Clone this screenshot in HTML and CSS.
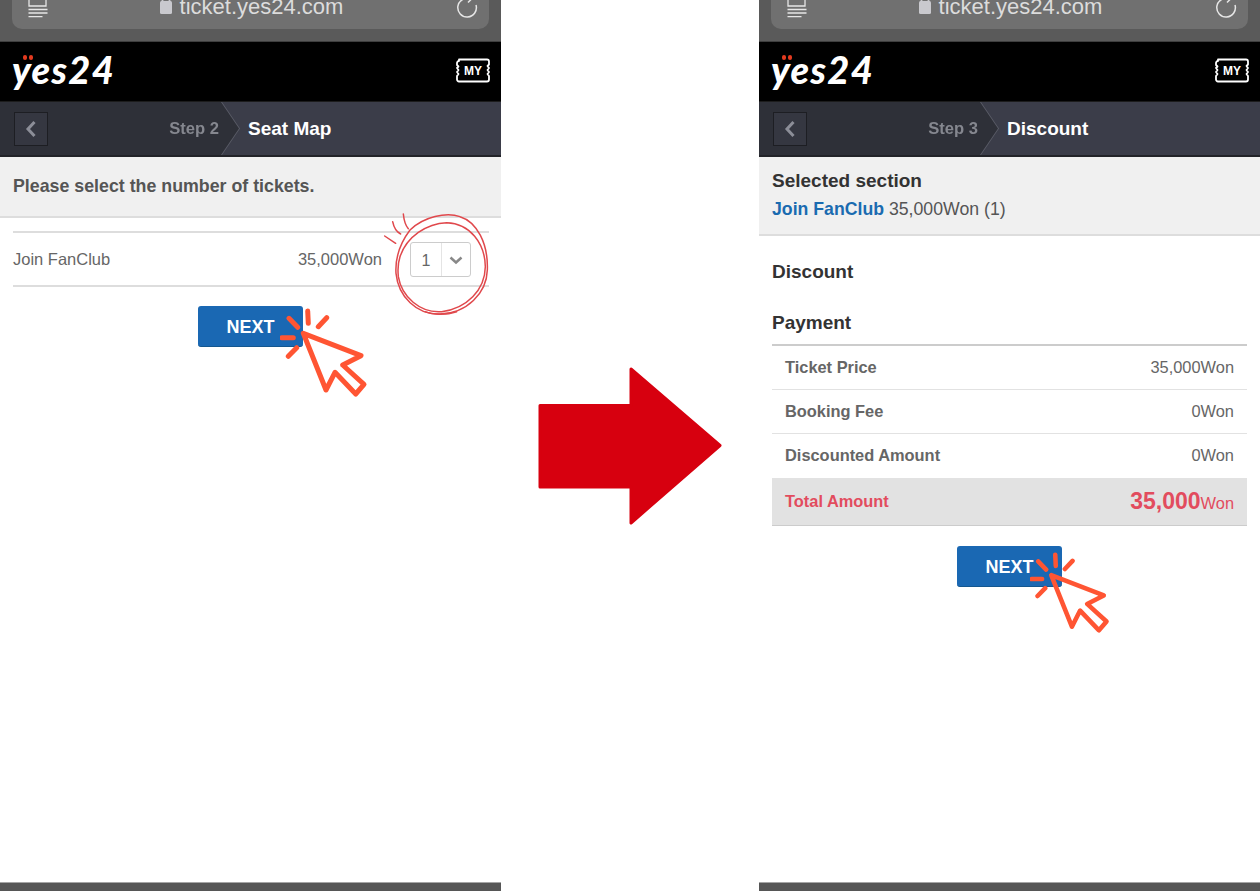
FILE: index.html
```html
<!DOCTYPE html>
<html lang="en">
<head>
<meta charset="utf-8">
<title>Yes24 ticket steps</title>
<link rel="stylesheet" href="styles.css">
</head>
<body>
<div class="page">
  <section class="phone">
    <div class="browser">
      <div class="url-pill">
        <svg class="ico-book" viewBox="0 0 20 20"><path d="M1 -4h17v10h-17z M0.500 9.500h19 M0.500 13h19 M0.500 16.700h14"/></svg>
        <div class="address">
          <svg class="ico-lock" viewBox="0 0 12 22"><rect x="0" y="8" width="12" height="13" rx="1.500"/><path d="M2.500 9v-4a3.500 3.500 0 0 1 7 0v4"/></svg>
          <span>ticket.yes24.com</span>
        </div>
        <svg class="ico-reload" viewBox="0 0 22 22"><path d="M14.500 3a9.300 9.300 0 1 0 5.500 6"/><path d="M12 0l3 3.500-3 3"/></svg>
      </div>
    </div>
    <header class="brand">
      <div class="logo"><i class="dot dot-a"></i><i class="dot dot-b"></i><span>yes24</span></div>
      <svg class="my" viewBox="0 0 36 25"><path d="M4 1.500h28a2 2 0 0 1 2 2v3l-1.500 1.500 1.500 2-1.500 2 1.500 2-1.500 2 1.500 2v3.500a2 2 0 0 1-2 2h-28a2 2 0 0 1-2-2v-3.500l1.500-2-1.500-2 1.500-2-1.500-2 1.500-1.500-1.500-1.500v-2a2 2 0 0 1 2-2z"/><text x="18" y="17.300" text-anchor="middle">MY</text></svg>
    </header>
    <nav class="steps">
      <div class="steps-left">
        <span class="back"><svg viewBox="0 0 12 20"><path d="M9.500 3l-6.500 7 6.500 7"/></svg></span>
        <span class="step">Step 2</span>
      </div>
      <span class="step-title">Seat Map</span>
    </nav>
    <div class="notice">Please select the number of tickets.</div>
    <div class="ticket-row">
      <span class="ticket-name">Join FanClub</span>
      <span class="ticket-price">35,000Won</span>
      <div class="qty">
        <span class="qty-num">1</span>
        <span class="qty-arrow"><svg viewBox="0 0 14 9"><path d="M1.500 1.500l5.500 5 5.500-5"/></svg></span>
      </div>
    </div>
    <button class="next next-a">NEXT</button>
    <div class="spacer"></div>
    <div class="home-bar"></div>

    <svg class="scribble" viewBox="0 0 393 375">
      <path d="M120 90C160 50 230 35 270 50C320 65 355 130 352 210C350 280 290 340 210 342C140 345 85 290 78 220C75 170 90 130 120 90"/>
      <path d="M90 170C110 110 170 70 230 68C300 70 345 130 346 200C345 270 290 325 215 335C150 340 95 290 85 230C82 200 85 185 90 170"/>
      <path d="M165 335C190 345 230 345 260 335"/>
      <path d="M44 108L77 130M68 65C72 85 80 96 92 102M100 42C102 62 106 76 115 86"/>
    </svg>
    <svg class="cursor cursor-a" viewBox="0 0 90 90">
      <path d="M23.300 25.300L81 47.700L62.700 57L84 76.300L75.700 86L55 64.300L46 82Z"/>
      <path d="M9 10.300L17.700 19.300M27.700 3L28.300 15.300M46.700 9.700L38.300 18.700M1.700 29.700H13.300M16.700 39.700L8.300 48.300"/>
    </svg>
  </section>

  <div class="between">
    <svg class="big-arrow" viewBox="0 0 184 158"><path d="M2 38.500H93V2L182 78.500L93 156V120H2Z"/></svg>
  </div>

  <section class="phone">
    <div class="browser">
      <div class="url-pill">
        <svg class="ico-book" viewBox="0 0 20 20"><path d="M1 -4h17v10h-17z M0.500 9.500h19 M0.500 13h19 M0.500 16.700h14"/></svg>
        <div class="address">
          <svg class="ico-lock" viewBox="0 0 12 22"><rect x="0" y="8" width="12" height="13" rx="1.500"/><path d="M2.500 9v-4a3.500 3.500 0 0 1 7 0v4"/></svg>
          <span>ticket.yes24.com</span>
        </div>
        <svg class="ico-reload" viewBox="0 0 22 22"><path d="M14.500 3a9.300 9.300 0 1 0 5.500 6"/><path d="M12 0l3 3.500-3 3"/></svg>
      </div>
    </div>
    <header class="brand">
      <div class="logo"><i class="dot dot-a"></i><i class="dot dot-b"></i><span>yes24</span></div>
      <svg class="my" viewBox="0 0 36 25"><path d="M4 1.500h28a2 2 0 0 1 2 2v3l-1.500 1.500 1.500 2-1.500 2 1.500 2-1.500 2 1.500 2v3.500a2 2 0 0 1-2 2h-28a2 2 0 0 1-2-2v-3.500l1.500-2-1.500-2 1.500-2-1.500-2 1.500-1.500-1.500-1.500v-2a2 2 0 0 1 2-2z"/><text x="18" y="17.300" text-anchor="middle">MY</text></svg>
    </header>
    <nav class="steps">
      <div class="steps-left">
        <span class="back"><svg viewBox="0 0 12 20"><path d="M9.500 3l-6.500 7 6.500 7"/></svg></span>
        <span class="step">Step 3</span>
      </div>
      <span class="step-title">Discount</span>
    </nav>
    <div class="selected">
      <h2 class="selected-title">Selected section</h2>
      <p class="selected-line"><b>Join FanClub</b> 35,000Won (1)</p>
    </div>
    <h3 class="heading heading-discount">Discount</h3>
    <h3 class="heading heading-payment">Payment</h3>
    <div class="pay">
      <div class="pay-row"><span class="pay-label">Ticket Price</span><span>35,000Won</span></div>
      <div class="pay-row"><span class="pay-label">Booking Fee</span><span>0Won</span></div>
      <div class="pay-row pay-row-last"><span class="pay-label">Discounted Amount</span><span>0Won</span></div>
      <div class="pay-total"><span class="pay-label">Total Amount</span><span><b class="total-num">35,000</b>Won</span></div>
    </div>
    <button class="next next-b">NEXT</button>
    <div class="spacer"></div>
    <div class="home-bar"></div>

    <svg class="cursor cursor-b" viewBox="0 0 90 90">
      <path d="M23.300 25.300L81 47.700L62.700 57L84 76.300L75.700 86L55 64.300L46 82Z"/>
      <path d="M9 10.300L17.700 19.300M27.700 3L28.300 15.300M46.700 9.700L38.300 18.700M1.700 29.700H13.300M16.700 39.700L8.300 48.300"/>
    </svg>
  </section>
</div>
</body>
</html>
```
FILE: styles.css
```css
* { box-sizing: border-box; }
html, body { margin: 0; padding: 0; background: #fff; }
body { font-family: "Liberation Sans", Arial, sans-serif; overflow: hidden; }
.page { display: flex; width: 1260px; height: 891px; }
.phone { position: relative; width: 501px; height: 891px; display: flex; flex-direction: column; overflow: hidden; }
.between { width: 258px; display: flex; align-items: center; justify-content: center; }
.big-arrow { width: 184px; height: 158px; }
.big-arrow path { fill: #d7000f; stroke: #d7000f; stroke-width: 3; stroke-linejoin: round; }

.browser { height: 42px; flex: none; padding: 0 12px; background: #5a5a5a; border-bottom: 1px solid #3e3e3e; }
.url-pill { height: 29px; background: #707070; border-radius: 0 0 10px 10px; display: flex; align-items: flex-start; justify-content: space-between; padding: 0 11px 0 16px; overflow: hidden; }
.ico-book { width: 20px; height: 20px; flex: none; }
.ico-book path { fill: none; stroke: #e6e6e6; stroke-width: 1.300; }
.address { display: flex; align-items: flex-start; gap: 8px; color: #dcdcdc; font-size: 22px; line-height: 24px; margin-top: -5px; margin-left: -1px; }
.ico-lock { width: 12px; height: 22px; margin-top: -2px; }
.ico-lock rect { fill: #c9c9ce; }
.ico-lock path { fill: none; stroke: #c9c9ce; stroke-width: 1.800; }
.ico-reload { width: 22px; height: 22px; flex: none; margin-top: -4px; }
.ico-reload path { fill: none; stroke: #e6e6e6; stroke-width: 1.500; }

.brand { height: 60px; flex: none; background: #000; display: flex; align-items: center; justify-content: space-between; padding: 0 10px 0 12px; border-bottom: 1px solid #1c1c1c; }
.logo { position: relative; top: -3px; color: #fff; font-family: Lato, "Liberation Sans", sans-serif; font-weight: 900; font-style: italic; font-size: 38px; line-height: 40px; letter-spacing: 1.300px; }
.dot { position: absolute; top: 6px; width: 4px; height: 5px; border-radius: 2px; background: #e33a1f; }
.dot-a { left: 11px; }
.dot-b { left: 17px; }
.my { width: 36px; height: 25px; margin-bottom: 2px; }
.my path { fill: none; stroke: #fff; stroke-width: 1.800; stroke-linejoin: round; }
.my text { fill: #fff; font-family: "Liberation Sans", sans-serif; font-weight: 700; font-size: 12px; }

.steps { height: 55px; flex: none; display: flex; align-items: center; background: #3b3d49; border-bottom: 2px solid #222328; }
.steps-left { position: relative; z-index: 0; width: 239px; height: 100%; display: flex; align-items: center; justify-content: space-between; padding: 0 20px 0 14px; filter: drop-shadow(1px 0 0 #5b5d68); }
.steps-left::before { content: ""; position: absolute; inset: 0; z-index: -1; background: #2e3038; clip-path: polygon(0 0, 221px 0, 100% 50%, 221px 100%, 0 100%); }
.back { width: 34px; height: 34px; background: #353741; border: 1px solid #1d1e23; display: flex; align-items: center; justify-content: center; }
.back svg { width: 12px; height: 20px; }
.back path { fill: none; stroke: #8c8e98; stroke-width: 3; }
.step { color: #85878f; font-weight: 700; font-size: 16.600px; }
.step-title { margin-left: 9px; color: #fff; font-weight: 700; font-size: 19px; }

.notice { height: 61px; flex: none; display: flex; align-items: center; padding: 0 13px; background: #f0f0f0; border-bottom: 2px solid #ddd; color: #555; font-weight: 700; font-size: 17.800px; }
.ticket-row { flex: none; height: 56px; margin: 13px 12px 0 13px; display: flex; align-items: center; border-top: 2px solid #ddd; border-bottom: 2px solid #ddd; color: #666; font-size: 16.500px; }
.ticket-name { flex: 1; padding-top: 1px; }
.ticket-price { margin-right: 28px; padding-top: 1px; }
.qty { width: 61px; height: 35px; margin-right: 18px; display: flex; border: 1px solid #ccc; border-radius: 3px; }
.qty-num { width: 31px; display: flex; align-items: center; justify-content: center; padding-top: 3px; border-right: 1px solid #e4e4e4; font-size: 16px; color: #666; }
.qty-arrow { flex: 1; display: flex; align-items: center; justify-content: center; padding-top: 3px; }
.qty-arrow svg { width: 14px; height: 9px; }
.qty-arrow path { fill: none; stroke: #888; stroke-width: 2.500; }

.next { flex: none; display: block; width: 105px; height: 41px; margin: 0 0 0 198px; padding: 2px 0 0; border: 0; border-bottom: 1px solid #14578f; border-radius: 3px; background: #1a68b3; color: #fff; font-family: inherit; font-weight: 700; font-size: 18px; text-align: center; }
.next-a { margin-top: 19px; }
.next-b { margin-top: 20px; }
.spacer { flex: 1; }
.home-bar { flex: none; height: 9px; background: #565656; border-top: 1px solid #a5a5a5; }

.selected { height: 79px; flex: none; padding: 12px 13px 0; background: #f0f0f0; border-bottom: 2px solid #ddd; }
.selected-title { margin: 0; color: #333; font-size: 19px; line-height: 24px; font-weight: 700; }
.selected-line { margin: 6px 0 0; color: #555; font-size: 17.700px; line-height: 20px; }
.selected-line b { color: #1a6bb0; }
.heading { margin: 0 13px; color: #333; font-size: 19px; line-height: 24px; font-weight: 700; }
.heading-discount { margin-top: 24px; }
.heading-payment { margin-top: 27px; }
.pay { margin: 9px 13px 0; border-top: 2px solid #ccc; color: #666; font-size: 16.400px; }
.pay-row { height: 44px; display: flex; align-items: center; justify-content: space-between; padding: 0 13px 1px; border-bottom: 1px solid #e2e2e2; }
.pay-row-last { height: 45px; }
.pay-label { font-weight: 700; }
.pay-total { height: 47px; display: flex; align-items: center; justify-content: space-between; padding: 0 13px 2px; background: #e2e2e2; border-bottom: 1px solid #ccc; color: #e24c5e; }
.total-num { font-size: 23px; }

.scribble { position: absolute; left: 370px; top: 200px; width: 131px; height: 125px; }
.scribble path { fill: none; stroke: #e0484c; stroke-width: 4.500; stroke-linecap: round; }
.cursor { position: absolute; }
.cursor path { fill: none; stroke: #ff5533; stroke-width: 5; stroke-linejoin: round; stroke-linecap: round; }
.cursor-a { left: 280px; top: 308px; width: 90px; height: 90px; }
.cursor-b { left: 270.500px; top: 552px; width: 82px; height: 82px; }
```
